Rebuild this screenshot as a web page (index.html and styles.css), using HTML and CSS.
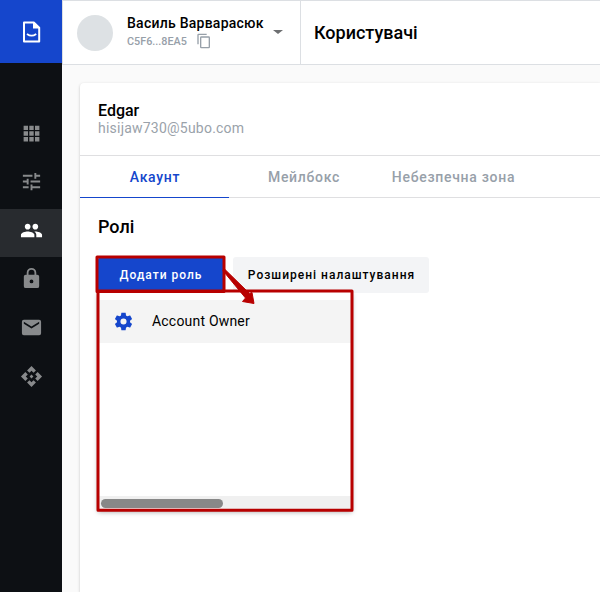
FILE: index.html
```html
<!DOCTYPE html>
<html lang="uk">
<head>
<meta charset="utf-8">
<title>Користувачі</title>
<link rel="stylesheet" href="styles.css">
</head>
<body>
<div class="app">
  <aside class="sidebar">
    <a class="logo"><svg width="20" height="24" viewBox="0 0 20 24"><path d="M2 2.400h9.800L17.200 7.800v13.700H2z" fill="none" stroke="#fff" stroke-width="2" stroke-linejoin="round"/><path d="M11 2v6.500h6.500z" fill="#fff"/><path d="M5 14q4.600 3.400 9.200 0" fill="none" stroke="#fff" stroke-width="1.800"/></svg></a>
    <nav class="nav">
      <a class="nav-item"><svg class="icon icon-apps" viewBox="0 0 24 24"><path d="M3 3h5v5H3zm6.500 0h5v5h-5zM16 3h5v5h-5zM3 9.500h5v5H3zm6.500 0h5v5h-5zm6.500 0h5v5h-5zM3 16h5v5H3zm6.500 0h5v5h-5zm6.500 0h5v5h-5z"/></svg></a>
      <a class="nav-item"><svg class="icon icon-tune" viewBox="0 0 24 24"><path d="M3 17v2h6v-2H3zM3 5v2h10V5H3zm10 16v-2h8v-2h-8v-2h-2v6h2zM7 9v2H3v2h4v2h2V9H7zm14 4v-2H11v2h10zm-6-4h2V7h4V5h-4V3h-2v6z"/></svg></a>
      <a class="nav-item active"><svg class="icon" viewBox="0 0 24 24"><path d="M16 11c1.660 0 2.990-1.340 2.990-3S17.660 5 16 5s-3 1.340-3 3 1.340 3 3 3zm-8 0c1.660 0 2.990-1.340 2.990-3S9.660 5 8 5 5 6.340 5 8s1.340 3 3 3zm0 2c-2.330 0-7 1.170-7 3.500V19h14v-2.500C15 14.170 10.330 13 8 13zm8 0c-.290 0-.620.020-.970.050 1.160.840 1.970 1.970 1.970 3.450V19h6v-2.500c0-2.330-4.670-3.500-7-3.500z"/></svg></a>
      <a class="nav-item"><svg class="icon" viewBox="0 0 24 24"><path d="M18 8h-1V6A5 5 0 0 0 7 6v2H6a2 2 0 0 0-2 2v10a2 2 0 0 0 2 2h12a2 2 0 0 0 2-2V10a2 2 0 0 0-2-2zm-6 9a2 2 0 1 1 0-4 2 2 0 0 1 0 4zm3.100-9H8.900V6a3.100 3.100 0 0 1 6.200 0z"/></svg></a>
      <a class="nav-item"><svg class="icon" viewBox="0 0 24 24"><path d="M20 4H4a2 2 0 0 0-2 2v12a2 2 0 0 0 2 2h16a2 2 0 0 0 2-2V6a2 2 0 0 0-2-2zm0 4-8 5-8-5V6l8 5 8-5z"/></svg></a>
      <a class="nav-item"><svg class="icon" viewBox="0 0 24 24"><path d="M14 12l-2 2-2-2 2-2zM12 6l2.120 2.120 2.500-2.500L12 1 7.380 5.620l2.500 2.500zM6 12l2.120-2.120-2.500-2.500L1 12l4.620 4.620 2.500-2.500zM18 12l-2.120 2.120 2.500 2.500L23 12l-4.620-4.620-2.500 2.500zM12 18l-2.120-2.120-2.500 2.500L12 23l4.620-4.620-2.500-2.500z"/></svg></a>
    </nav>
  </aside>
  <div class="content">
    <header class="header">
      <div class="account">
        <span class="avatar"></span>
        <div class="account-text">
          <div class="account-name">Василь Варварасюк</div>
          <div class="account-id"><span>C5F6...8EA5</span><svg class="copy" viewBox="0 0 24 24"><path d="M16 1H4a2 2 0 0 0-2 2v14h2V3h12zm3 4H8a2 2 0 0 0-2 2v14a2 2 0 0 0 2 2h11a2 2 0 0 0 2-2V7a2 2 0 0 0-2-2zm0 16H8V7h11z"/></svg></div>
        </div>
        <span class="caret"></span>
      </div>
      <h1 class="page-title">Користувачі</h1>
    </header>
    <main class="card">
      <div class="user">
        <div class="user-name">Edgar</div>
        <div class="user-mail">hisijaw730@5ubo.com</div>
      </div>
      <div class="tabs">
        <a class="tab selected">Акаунт</a>
        <a class="tab">Мейлбокс</a>
        <a class="tab">Небезпечна зона</a>
      </div>
      <section class="roles">
        <h2>Ролі</h2>
        <div class="actions">
          <button class="btn primary">Додати роль</button>
          <button class="btn">Розширені налаштування</button>
          <div class="menu">
            <div class="option"><svg class="gear" viewBox="0 0 24 24"><path d="M19.430 12.980c.040-.320.070-.640.070-.980s-.030-.660-.070-.980l2.110-1.650c.190-.150.240-.420.120-.640l-2-3.460c-.120-.220-.390-.300-.610-.220l-2.490 1c-.520-.400-1.080-.730-1.690-.980l-.380-2.650C14.460 2.180 14.250 2 14 2h-4c-.250 0-.460.180-.490.420l-.380 2.650c-.610.250-1.170.590-1.690.980l-2.490-1c-.230-.090-.490 0-.610.220l-2 3.460c-.130.220-.070.490.120.640l2.110 1.650c-.040.320-.070.650-.070.980s.030.660.070.980l-2.110 1.650c-.190.150-.240.420-.120.640l2 3.460c.120.220.390.300.610.220l2.490-1c.520.400 1.080.730 1.690.980l.380 2.650c.030.240.240.420.490.420h4c.250 0 .460-.180.490-.420l.380-2.650c.610-.250 1.170-.590 1.690-.980l2.490 1c.230.090.490 0 .610-.220l2-3.460c.120-.220.070-.490-.120-.640zM12 15.500a3.500 3.500 0 1 1 0-7 3.500 3.500 0 0 1 0 7z"/></svg><span class="option-label">Account Owner</span></div>
            <div class="scrollbar"><div class="thumb"></div></div>
          </div>
        </div>
      </section>
    </main>
  </div>
</div>
<svg class="marks" width="600" height="592" viewBox="0 0 600 592">
  <g fill="none" stroke="#b80000" stroke-width="3" stroke-linejoin="round">
    <rect x="97" y="257" width="127" height="34.500"/>
    <rect x="98" y="291" width="254" height="219.200"/>
  </g>
  <path d="M222.800 270.500L224.500 269L249.500 293.500L252 292.500L254 303.500L242.500 301.500L245.500 298Z" fill="#b80000" stroke="#b80000" stroke-linejoin="round"/>
</svg>
</body>
</html>
```
FILE: styles.css
```css
* { box-sizing: border-box; }
body {
  margin: 0;
  overflow: hidden;
  background: #fafafa;
  color: #000;
  font-family: Roboto, "Liberation Sans", sans-serif;
}
.app { display: flex; height: 592px; }
.sidebar { width: 62px; flex: none; background: #0d1014; }
.logo {
  display: flex;
  align-items: center;
  justify-content: center;
  height: 63px;
  padding-left: 2px;
  background: #1546cc;
}
.nav { display: flex; flex-direction: column; gap: .7px; padding-top: 46px; }
.nav-item { height: 48px; display: flex; align-items: center; justify-content: center; }
.icon { width: 23px; height: 23px; fill: #888a8c; }
.icon-apps { width: 21px; height: 21px; }
.icon-tune { margin-bottom: 1px; }
.active { margin-top: 2.600px; background: #282b2f; padding-bottom: 5px; }
.active + .nav-item { margin-top: -3px; }
.active .icon { fill: #fff; }
.content { flex: 1; min-width: 0; display: flex; flex-direction: column; }
.header {
  display: flex;
  height: 65px;
  flex: none;
  background: #fff;
  border: 1px solid #dcdfe3;
  border-right: 0;
}
.account {
  display: flex;
  align-items: center;
  width: 238px;
  border-right: 1px solid #dcdfe3;
  padding-left: 14px;
}
.avatar { width: 36px; height: 36px; flex: none; border-radius: 50%; background: #dde1e4; }
.account-text { margin-left: 14px; width: 137px; margin-top: -1px; }
.account-name { font-size: 14px; line-height: 18px; font-weight: 500; letter-spacing: .25px; white-space: nowrap; }
.account-id { display: flex; align-items: center; height: 19px; font-size: 10.800px; font-weight: 500; color: #97a0a9; }
.copy { width: 16px; height: 16px; margin-left: 9px; fill: #97a0a9; }
.caret { margin: -2px 0 0 9px; border: 5px solid transparent; border-top: 4px solid #6d6f71; border-bottom: 0; }
.page-title { margin: 0 0 0 13px; font-size: 18px; line-height: 63px; font-weight: 500; }
.card {
  flex: 1;
  margin: 18px 0 0 18px;
  background: #fff;
  border-radius: 4px 0 0 0;
  box-shadow: 0 1px 3px rgba(0, 0, 0, .22);
}
.user { height: 73px; padding: 19px 18px 0; border-bottom: 1px solid #dfdfe1; }
.user-name { font-size: 16px; line-height: 18px; font-weight: 500; }
.user-mail { font-size: 14px; line-height: 17px; letter-spacing: .22px; color: #9aa2aa; }
.tabs { display: flex; height: 42px; border-bottom: 1px solid #dfdfe1; }
.tab {
  width: 149px;
  height: 42px;
  text-align: center;
  font-size: 14px;
  line-height: 42px;
  font-weight: 500;
  letter-spacing: .7px;
  padding-left: 1px;
  color: #97a0a9;
}
.tab:last-child { padding-left: 2px; }
.selected { color: #1546cc; border-bottom: 1px solid #1546cc; }
.roles { padding: 17px 18px 0; }
.roles h2 { margin: 0; font-size: 18px; line-height: 23px; font-weight: 500; }
.actions { position: relative; display: flex; gap: 8px; margin-top: 19px; }
.btn {
  height: 36px;
  padding: 0;
  width: 196px;
  border: 0;
  border-radius: 3px;
  background: #f3f4f6;
  font: 500 12px/36px Roboto, sans-serif;
  letter-spacing: 1px;
  padding-left: 1px;
  color: #000;
}
.primary { width: 127px; padding: 0 1px 0 0; background: #1546cc; color: #fff; }
.menu {
  position: absolute;
  left: 0;
  top: 35px;
  width: 254px;
  height: 218px;
  padding-top: 8px;
  display: flex;
  flex-direction: column;
  justify-content: space-between;
  background: #fff;
  box-shadow: 0 2px 5px rgba(0, 0, 0, .35);
}
.option { display: flex; align-items: center; height: 43px; padding-left: 15px; gap: 18px; background: #f4f4f4; font-size: 14px; letter-spacing: .2px; }
.option-label { margin-top: -2px; }
.gear { width: 21px; height: 21px; fill: #1546cc; }
.scrollbar { height: 14px; padding: 3px; background: #f0f0f0; }
.thumb { width: 122px; height: 9px; border-radius: 5px; background: #888; }
.marks { position: absolute; left: 0; top: 0; pointer-events: none; }
```
